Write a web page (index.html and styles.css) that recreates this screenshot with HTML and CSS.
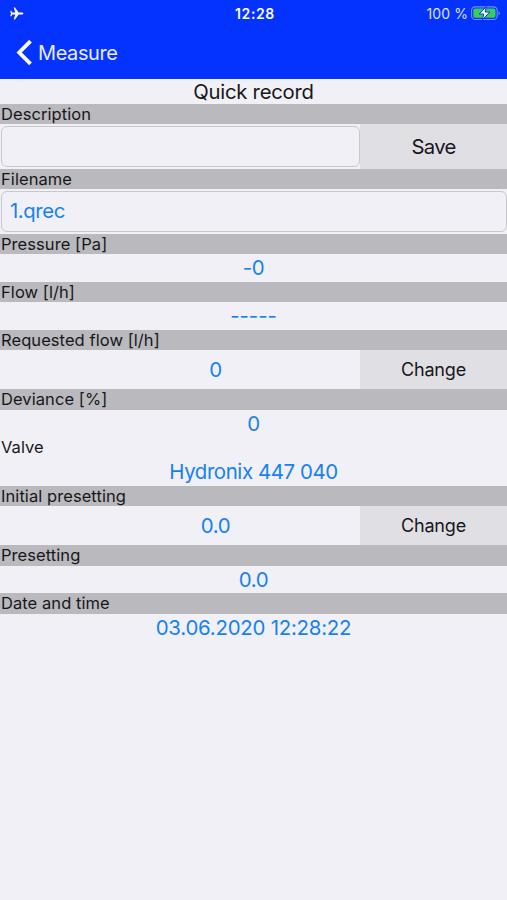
FILE: index.html
```html
<!DOCTYPE html>
<html lang="en">
<head>
<meta charset="utf-8">
<title>Quick record</title>
<link rel="stylesheet" href="styles.css">
</head>
<body>
<header class="top">
  <div class="status">
    <svg class="plane" width="14" height="13" viewBox="0 0 14 13"><path fill="#fff" d="M13.4 6.5c0-.7-.7-1.1-1.6-1.1H8.7L5 .5H3.7l1.6 4.9H2.4L1.2 3.8H.3l.6 2.7-.6 2.7h.9l1.2-1.6h2.9l-1.6 4.9H5l3.7-4.9h3.1c.9 0 1.6-.4 1.6-1.1z"/></svg>
    <span class="clock">12:28</span>
    <span class="power"><span class="percent">100 %</span>
      <svg width="30" height="15" viewBox="0 0 30 15"><rect x=".6" y=".9" width="25.6" height="12.6" rx="3.6" fill="none" stroke="#7590ff" stroke-width="1.1"/><rect x="2.3" y="2.6" width="22.2" height="9.2" rx="2" fill="#35cf5b"/><path d="M27.6 5.2c1.6.6 1.6 3.4 0 4z" fill="#7590ff"/><path d="M15.2.7 8.2 8h4.5l-1.2 5.8L18.8 6h-4.6z" fill="#fff" stroke="#0433ff" stroke-width="1"/></svg>
    </span>
  </div>
  <nav class="back">
    <svg width="17" height="28" viewBox="0 0 17 28"><path d="M14.5 2.2 3.2 13.5l11.3 11.3" fill="none" stroke="#fff" stroke-width="3.8"/></svg>
    <span>Measure</span>
  </nav>
</header>
<main>
  <h1>Quick record</h1>
  <h2 class="label">Description</h2>
  <div class="row form"><div class="field"></div><div class="button save">Save</div></div>
  <h2 class="label">Filename</h2>
  <div class="row single"><div class="field filename">1.qrec</div></div>
  <h2 class="label">Pressure [Pa]</h2>
  <div class="value">-0</div>
  <h2 class="label">Flow [l/h]</h2>
  <div class="value dashes">-----</div>
  <h2 class="label">Requested flow [l/h]</h2>
  <div class="row change"><div class="value">0</div><div class="button">Change</div></div>
  <h2 class="label">Deviance [%]</h2>
  <div class="value">0</div>
  <h2 class="label plain">Valve</h2>
  <div class="value">Hydronix 447 040</div>
  <h2 class="label">Initial presetting</h2>
  <div class="row change"><div class="value">0.0</div><div class="button">Change</div></div>
  <h2 class="label">Presetting</h2>
  <div class="value">0.0</div>
  <h2 class="label">Date and time</h2>
  <div class="value date">03.06.2020 12:28:22</div>
</main>
</body>
</html>
```
FILE: styles.css
```css
* { box-sizing: border-box; }
body { margin: 0; min-height: 900px; background: #f1f0f6; color: #17171b; font-family: Inter, "Liberation Sans", sans-serif; }
.top { height: 79px; background: #0433ff; color: #fff; }
.status { display: grid; grid-template-columns: 1fr auto 1fr; align-items: center; height: 27px; padding: 0 6px 0 10px; }
.clock { margin-right: 1px; font-size: 14px; font-weight: 600; letter-spacing: .6px; }
.power { display: flex; justify-content: flex-end; align-items: center; gap: 3px; font-size: 14px; color: #dce3ff; }
.power svg { display: block; }
.percent { letter-spacing: .1px; }
.back { display: flex; align-items: center; gap: 5px; height: 52px; padding-left: 16px; font-size: 20px; letter-spacing: -.4px; color: #e9edff; }
h1 { height: 25px; margin: 0; font-size: 20.3px; font-weight: 400; line-height: 26px; letter-spacing: -.25px; text-align: center; }
.label { height: 20.4px; margin: 0; padding-left: 1px; background: #bab9be; font-size: 16.5px; font-weight: 400; line-height: 21px; letter-spacing: .07px; white-space: nowrap; }
.plain { background: none; }
.value { height: 27.66px; color: #1581f5; font-size: 20.4px; line-height: 28.6px; letter-spacing: -.4px; text-align: center; }
.dashes { letter-spacing: -.05px; }
.date { letter-spacing: -.22px; }
.row { display: grid; }
.form { grid-template-columns: 360px 1fr; height: 44.4px; }
.single { height: 44.4px; }
.change { grid-template-columns: 360px 1fr; height: 39.4px; }
.change .value { width: 431px; height: 39px; line-height: 40.6px; }
.field { margin: 1.5px 0 1.5px 1px; border: 1px solid #c8c7cd; border-radius: 6px; background: #f1f0f6; }
.filename { padding-left: 8px; color: #1581f5; font-size: 20.3px; line-height: 38px; letter-spacing: -.4px; }
.button { z-index: 1; height: 38.6px; background: #e0dfe4; font-size: 18px; line-height: 40.6px; letter-spacing: -.2px; text-align: center; }
.save { height: 44.4px; font-size: 20.3px; line-height: 46.4px; letter-spacing: -.7px; }
```
